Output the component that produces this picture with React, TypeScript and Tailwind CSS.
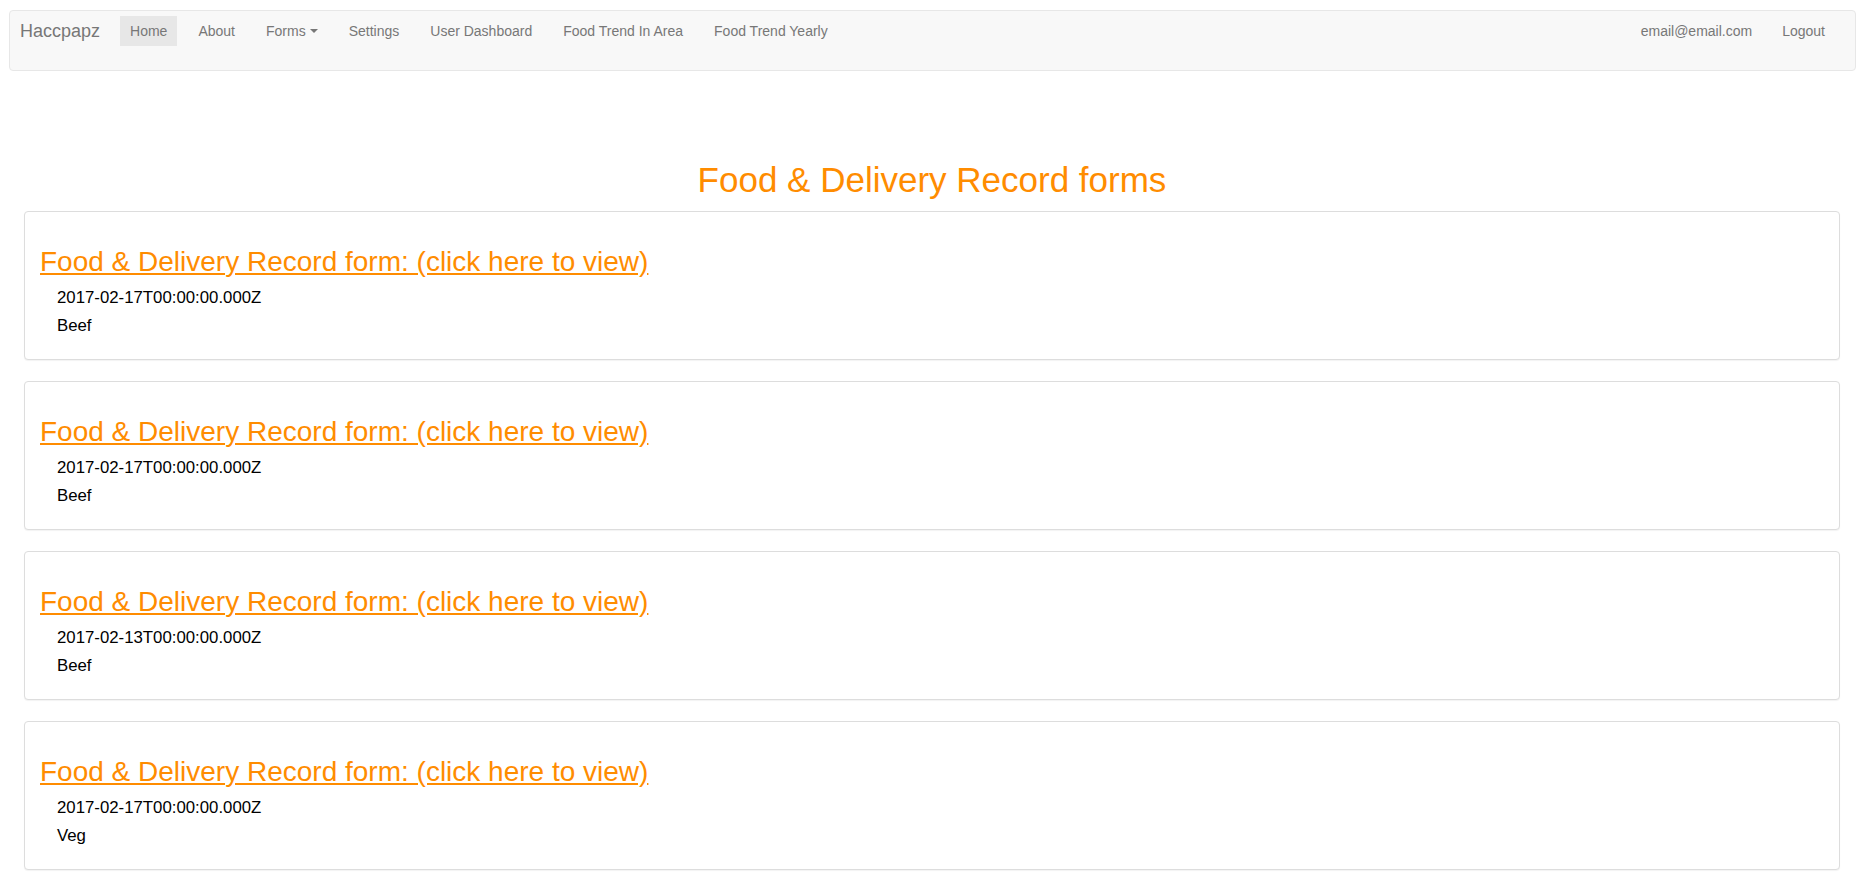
import React from 'react'

const links = ['Home', 'About', 'Forms', 'Settings', 'User Dashboard', 'Food Trend In Area', 'Food Trend Yearly']

const records = [
  { date: '2017-02-17T00:00:00.000Z', food: 'Beef' },
  { date: '2017-02-17T00:00:00.000Z', food: 'Beef' },
  { date: '2017-02-13T00:00:00.000Z', food: 'Beef' },
  { date: '2017-02-17T00:00:00.000Z', food: 'Veg' },
]

function Navbar() {
  return (
    <nav className="ml-[9px] mr-[14px] mt-[10px] h-[61px] rounded-[4px] border border-[#e7e7e7] bg-[#f8f8f8] pt-[5px]">
      <div className="flex h-[30px] items-center justify-between">
        <div className="flex items-center">
          <a className="pl-[10px] pr-[20px] text-[18px] leading-[20px] text-[#777]">Haccpapz</a>
          <ul className="flex items-center gap-[11px]">
            {links.map((l) => (
              <li key={l}>
                <a
                  className={
                    'flex h-[30px] items-center px-[10px] text-[14px] leading-[20px] text-[#777] ' +
                    (l === 'Home' ? 'bg-[#e7e7e7] text-[#555]' : '')
                  }
                >
                  {l}
                  {l === 'Forms' && (
                    <span className="ml-[4px] inline-block h-0 w-0 border-x-[4px] border-t-[4px] border-x-transparent border-t-[#777]" />
                  )}
                </a>
              </li>
            ))}
          </ul>
        </div>
        <ul className="flex items-center gap-[10px] pr-[20px]">
          <li>
            <a className="block px-[10px] text-[14px] leading-[20px] text-[#777]">email@email.com</a>
          </li>
          <li>
            <a className="block px-[10px] text-[14px] leading-[20px] text-[#777]">Logout</a>
          </li>
        </ul>
      </div>
    </nav>
  )
}

export default function App() {
  return (
    <div className="min-h-screen bg-white font-['Liberation_Sans',Arial,sans-serif]">
      <Navbar />

      <div className="ml-[24px] mr-[30px]">
        {/* Page title */}
        <h1 className="mt-[90px] mb-[11px] text-center text-[35px] leading-[38.5px] text-[#ff8c00]">
          Food &amp; Delivery Record forms
        </h1>

        {/* Record cards */}
        {records.map((r, i) => (
          <div
            key={i}
            className="mb-[21px] rounded-[4px] border border-[#ddd] bg-white px-[15px] pt-[34px] pb-[19px] shadow-[0_1px_1px_rgba(0,0,0,0.05)]"
          >
            <a className="text-[28px] leading-[31px] text-[#ff8c00] underline">
              Food &amp; Delivery Record form: (click here to view)
            </a>
            <div className="mt-[6px] pl-[17px] text-[16.8px] leading-[28px] text-black">
              <div>{r.date}</div>
              <div>{r.food}</div>
            </div>
          </div>
        ))}
      </div>
    </div>
  )
}
